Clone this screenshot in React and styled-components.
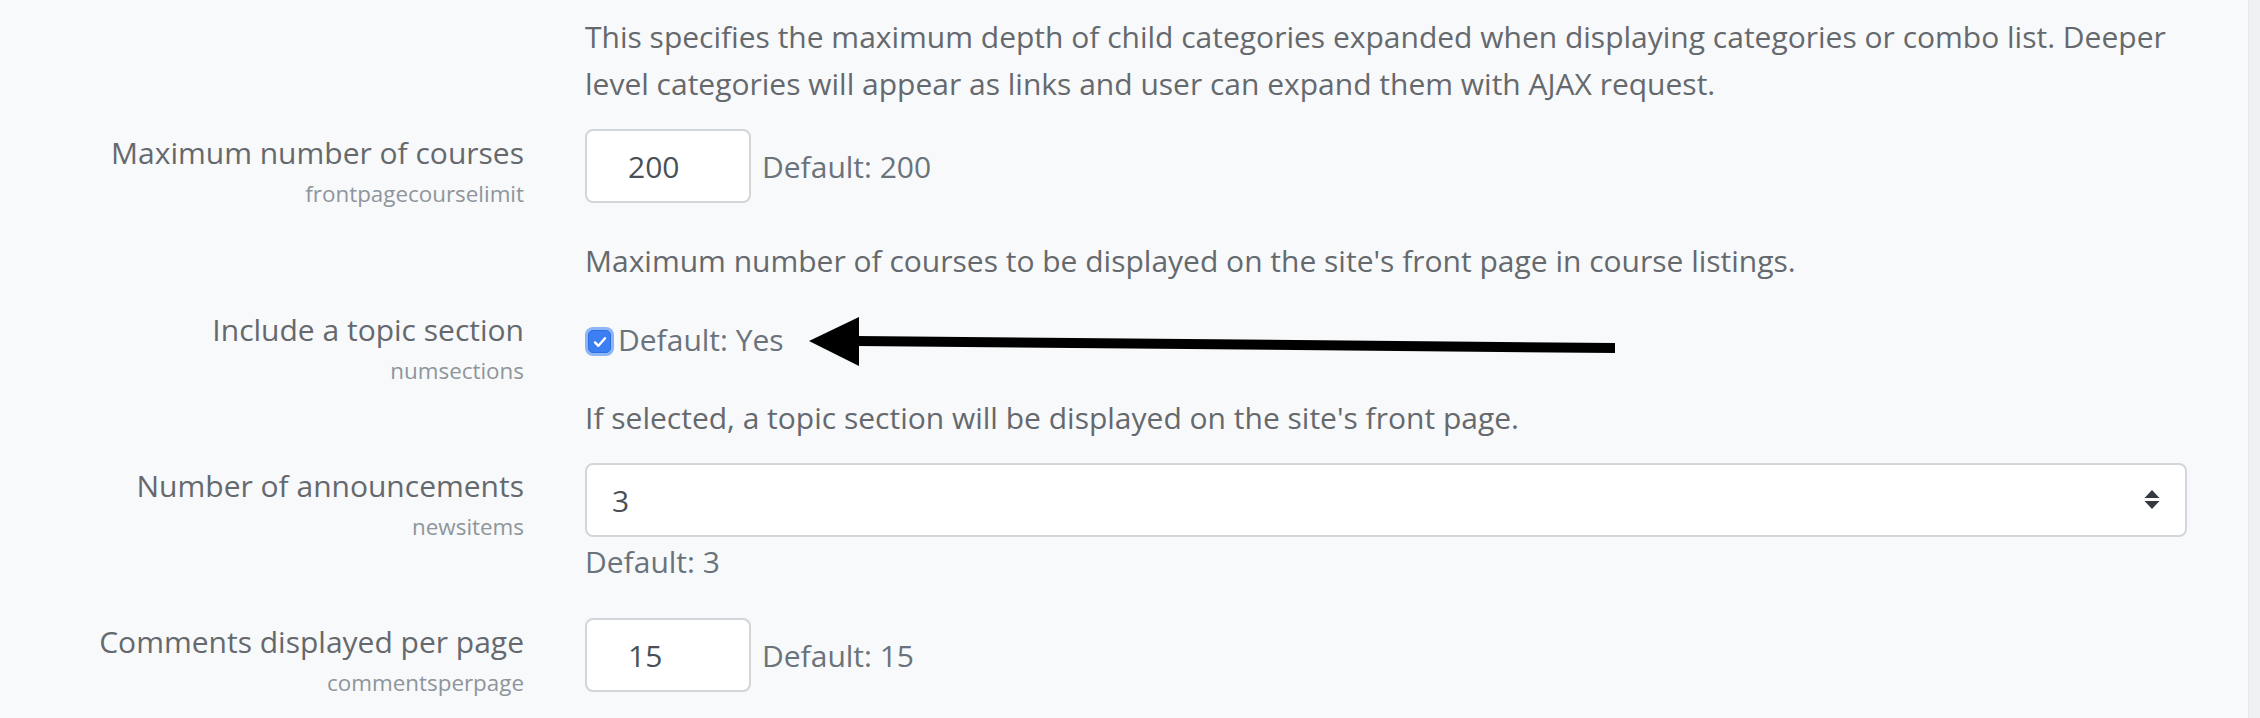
import React from 'react';
import styled, { createGlobalStyle } from 'styled-components';

const GlobalStyle = createGlobalStyle`
	html, body {
		margin: 0;
		padding: 0;
		background: #f8f9fa;
	}
	body {
		font-family: 'Open Sans', 'Noto Sans', sans-serif;
		color: #65696e;
		overflow: hidden;
	}
`;

const theme = {
	text: '#65696e',
	muted: '#6a737b',
	shortname: '#8e959c',
	input: '#495057',
	border: '#d2d6db',
};

export default function App() {
	return (
		<Page>
			<GlobalStyle />
			<Main>
				<Setting $bottom={22}>
					<Description $top={0}>
						This specifies the maximum depth of child categories expanded when
						displaying categories or combo list. Deeper level categories will
						appear as links and user can expand them with AJAX request.
					</Description>
				</Setting>

				<Setting $bottom={22}>
					<LabelCol>
						<Label>Maximum number of courses</Label>
						<ShortName>frontpagecourselimit</ShortName>
					</LabelCol>
					<InlineControl>
						<TextInput readOnly value="200" />
						<DefaultInfo>Default: 200</DefaultInfo>
					</InlineControl>
					<Description>
						Maximum number of courses to be displayed on the site's front page
						in course listings.
					</Description>
				</Setting>

				<Setting $bottom={21}>
					<LabelCol>
						<Label>Include a topic section</Label>
						<ShortName>numsections</ShortName>
					</LabelCol>
					<CheckControl>
						<CheckBox>
							<svg width="16" height="16" viewBox="0 0 16 16">
								<path
									d="M3 8.4 L6.4 11.8 L13 4.2"
									fill="none"
									stroke="#fff"
									strokeWidth="2.4"
									strokeLinecap="round"
									strokeLinejoin="round"
								/>
							</svg>
						</CheckBox>
						<DefaultInfo>Default: Yes</DefaultInfo>
						<Pointer width="820" height="64" viewBox="0 0 820 64">
							<polygon points="9,31 59,7 59,56" fill="#000" />
							<polygon points="57,26 815,33 815,43 57,36" fill="#000" />
						</Pointer>
					</CheckControl>
					<Description $top={31}>
						If selected, a topic section will be displayed on the site's front
						page.
					</Description>
				</Setting>

				<Setting $bottom={33}>
					<LabelCol>
						<Label>Number of announcements</Label>
						<ShortName>newsitems</ShortName>
					</LabelCol>
					<StackControl>
						<Select>
							<span>3</span>
							<svg width="16" height="20" viewBox="0 0 16 20">
								<polygon points="8,0 15.5,8 0.5,8" fill="#343a40" />
								<polygon points="0.5,11 15.5,11 8,19" fill="#343a40" />
							</svg>
						</Select>
						<DefaultInfo $below>Default: 3</DefaultInfo>
					</StackControl>
				</Setting>

				<Setting $bottom={22}>
					<LabelCol>
						<Label>Comments displayed per page</Label>
						<ShortName>commentsperpage</ShortName>
					</LabelCol>
					<InlineControl>
						<TextInput readOnly value="15" />
						<DefaultInfo>Default: 15</DefaultInfo>
					</InlineControl>
				</Setting>
			</Main>
			<Edge />
		</Page>
	);
}

const Page = styled.div`
	display: flex;
	width: 2260px;
	height: 718px;
	overflow: hidden;
`;

const Main = styled.div`
	flex: 1;
	padding-top: 13px;
`;

const Edge = styled.div`
	width: 11px;
	background: #f0f1f3;
	border-left: 1px solid #e6e8eb;
`;

const Setting = styled.div`
	display: grid;
	grid-template-columns: 524px 1602px;
	column-gap: 61px;
	padding-bottom: ${(p) => p.$bottom}px;
`;

const LabelCol = styled.div`
	grid-column: 1;
	grid-row: 1 / span 2;
	display: flex;
	flex-direction: column;
	align-items: flex-end;
	text-align: right;
`;

const Label = styled.label`
	font-size: 30px;
	line-height: 47px;
	color: ${theme.text};
`;

const ShortName = styled.span`
	font-size: 22.4px;
	line-height: 36px;
	color: ${theme.shortname};
`;

const Description = styled.div`
	grid-column: 2;
	margin-top: ${(p) => p.$top ?? 34}px;
	font-size: 30px;
	line-height: 47px;
	color: ${theme.text};
`;

const InlineControl = styled.div`
	grid-column: 2;
	display: flex;
	align-items: center;
	gap: 11px;
`;

const CheckControl = styled.div`
	grid-column: 2;
	position: relative;
	display: flex;
	align-items: center;
	gap: 7px;
	padding-top: 10px;
`;

const StackControl = styled.div`
	grid-column: 2;
	display: flex;
	flex-direction: column;
`;

const TextInput = styled.input`
	box-sizing: border-box;
	width: 166px;
	height: 74px;
	padding: 0 0 0 41px;
	border: 2px solid ${theme.border};
	border-radius: 8px;
	background: #fff;
	font-family: inherit;
	font-size: 30px;
	color: ${theme.input};
	outline: none;
`;

const DefaultInfo = styled.span`
	font-size: 30px;
	line-height: 47px;
	color: ${theme.muted};
	margin-top: ${(p) => (p.$below ? 1 : 0)}px;
`;

const CheckBox = styled.span`
	box-sizing: border-box;
	width: 23px;
	height: 23px;
	margin-left: 3px;
	margin-top: 4px;
	display: flex;
	align-items: center;
	justify-content: center;
	border-radius: 5px;
	background: #3b7ff2;
	border: 1px solid #2c6ee0;
	box-shadow: 0 0 0 3px #8db6f7;
`;

const Pointer = styled.svg`
	position: absolute;
	left: 215px;
	top: 4px;
`;

const Select = styled.div`
	box-sizing: border-box;
	width: 100%;
	height: 74px;
	margin-top: 1px;
	display: flex;
	align-items: center;
	justify-content: space-between;
	padding: 0 25px;
	border: 2px solid ${theme.border};
	border-radius: 8px;
	background: #fff;
	font-size: 30px;
	color: ${theme.input};
`;
